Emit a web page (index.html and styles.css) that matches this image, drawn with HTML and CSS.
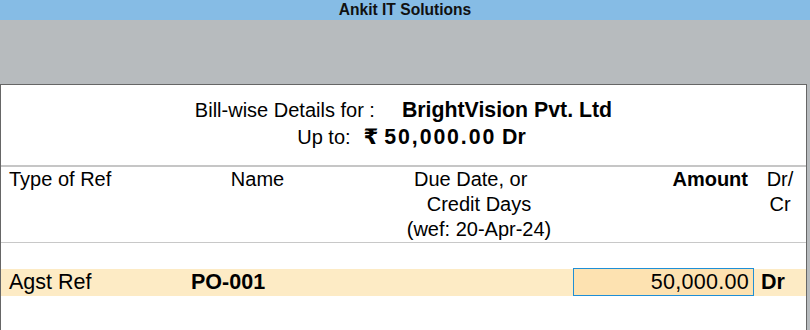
FILE: index.html
```html
<!DOCTYPE html>
<html>
<head>
<meta charset="utf-8">
<link rel="stylesheet" href="styles.css">
</head>
<body>
<div class="titlebar">Ankit IT Solutions</div>
<div class="gap"></div>
<div class="panel">
  <div class="heading">
    <div class="hline">Bill-wise Details for :<b class="party">BrightVision Pvt. Ltd</b></div>
    <div class="hline second">Up to:<b class="upto">₹ <span class="num">50,000.00</span> Dr</b></div>
  </div>
  <div class="sep"></div>
  <div class="cols head">
    <div class="c-type">Type of Ref</div>
    <div class="c-name">Name</div>
    <div class="c-spacer"></div>
    <div class="c-due">Due Date, or&nbsp;&nbsp;&nbsp;<br>Credit Days<br>(wef: 20-Apr-24)</div>
    <div class="c-amt"><b>Amount</b></div>
    <div class="c-drcr">Dr/<br>Cr</div>
  </div>
  <div class="sep thin"></div>
  <div class="blank"></div>
  <div class="cols row">
    <div class="c-type">Agst Ref</div>
    <div class="c-name left"><b>PO-001</b></div>
    <div class="c-spacer"></div>
    <div class="c-due"></div>
    <div class="c-amt box">50,000.00</div>
    <div class="c-dr"><b>Dr</b></div>
  </div>
</div>
</body>
</html>
```

FILE: styles.css
```css
html, body {
  margin: 0;
  padding: 0;
}
body {
  background: #b7bbbe;
  font-family: "Liberation Sans", Arial, "DejaVu Sans", sans-serif;
  color: #000;
  width: 810px;
  height: 330px;
  overflow: hidden;
}
.titlebar {
  height: 20px;
  line-height: 20px;
  background: #86bce5;
  text-align: center;
  font-weight: bold;
  font-size: 15.6px;
  color: #111;
}
.gap {
  height: 64px;
}
.panel {
  width: 805px;
  height: 260px;
  background: #fff;
  border: 1px solid #666;
  border-bottom: none;
}
.heading {
  padding: 12px 0 14px 0;
  text-align: center;
  font-size: 20px;
  line-height: 27px;
}
.heading b {
  font-weight: bold;
  font-size: 21.3px;
}
.second {
  padding-left: 16px;
}
.party {
  margin-left: 27px;
}
.upto {
  margin-left: 13px;
}
.num {
  letter-spacing: 1.9px;
}
.sep {
  height: 2px;
  background: #c6c6c6;
}
.sep.thin {
  height: 1px;
  background: #c8c8c8;
}
.cols {
  display: grid;
  grid-template-columns: 182px 133px 61px 188px 181px 1fr;
  padding-left: 8px;
  font-size: 20px;
}
.head {
  line-height: 25px;
  height: 75px;
}
.c-name {
  text-align: center;
}
.c-name.left {
  text-align: left;
}
.c-due {
  text-align: center;
}
.c-amt {
  text-align: right;
  padding-right: 6px;
}
.c-drcr {
  text-align: center;
}
.blank {
  height: 26px;
}
.row {
  background: #fdebc5;
  height: 27px;
  line-height: 27px;
  font-size: 21.5px;
}
.box {
  background: #fde2b1;
  border: 1px solid #1f8fd6;
  box-sizing: border-box;
  height: 28px;
  line-height: 26px;
  margin-top: -1px;
  padding-right: 4px;
  letter-spacing: 0.3px;
}
.c-dr {
  padding-left: 7px;
}
```
